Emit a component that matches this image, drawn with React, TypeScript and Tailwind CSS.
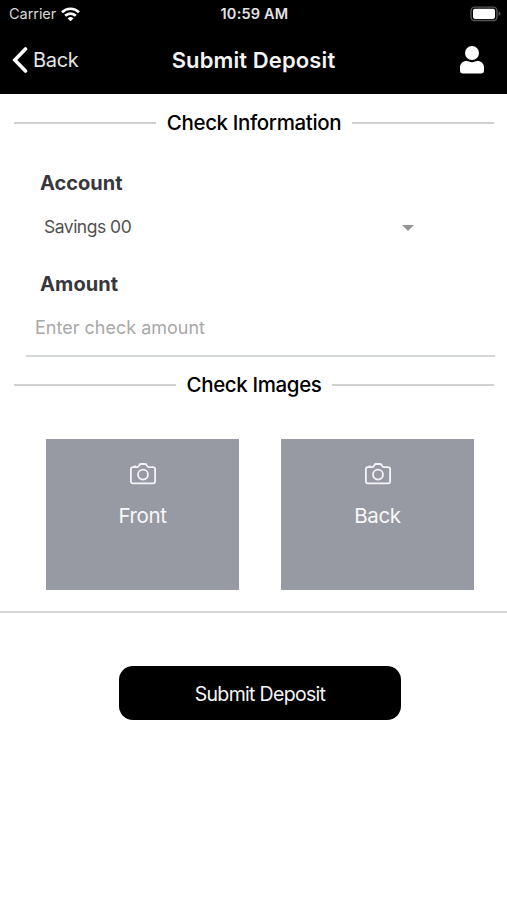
import { useState } from 'react';

function WifiIcon() {
  return (
    <svg width="19" height="15" viewBox="0 0 19 15" fill="none" stroke="#fff" strokeWidth="2.7">
      <path d="M1 5.200a12.200 12.200 0 0 1 17 0" />
      <path d="M4.200 8.800a7.600 7.600 0 0 1 10.600 0" />
      <path d="M9.500 14.300 6.500 11.500a4.400 4.400 0 0 1 6 0z" fill="#fff" stroke="none" />
    </svg>
  );
}

function BatteryIcon() {
  return (
    <svg width="32" height="16" viewBox="0 0 32 16" fill="none">
      <rect x="1" y="1.1" width="26" height="13.4" rx="3.6" stroke="#58585a" strokeWidth="1.4" />
      <rect x="3" y="2.700" width="22" height="10.200" rx="1.8" fill="#fff" />
      <path d="M28.6 5.6c1.2.4 1.9 1.2 1.9 2.2s-.7 1.8-1.9 2.2z" fill="#58585a" />
    </svg>
  );
}

function UserIcon() {
  return (
    <svg width="24" height="28" viewBox="0 0 24 28" fill="#fff">
      <circle cx="12" cy="7" r="7" />
      <path d="M0 23v-1.5C0 17.5 2.8 15 6.5 15c1.8 0 2.8 1.2 5.5 1.2S15.7 15 17.5 15c3.7 0 6.5 2.5 6.5 6.5V25a2.4 2.4 0 0 1-2.4 2.4H2.4A2.4 2.4 0 0 1 0 25z" />
    </svg>
  );
}

function CameraIcon() {
  return (
    <svg width="26" height="22" viewBox="0 0 26 22" fill="none" stroke="#f4f4f6" strokeWidth="1.8" strokeLinejoin="round">
      <path d="M3 4.2h4.2c.7 0 1-.3 1.4-.9l.8-1.300c.4-.7.9-1 1.600-1h4c.7 0 1.200.3 1.600 1l.8 1.300c.4.600.7.900 1.400.900H23a2.100 2.100 0 0 1 2.100 2.100v12A2.100 2.100 0 0 1 23 20.400H3A2.100 2.100 0 0 1 .9 18.300v-12A2.100 2.100 0 0 1 3 4.200z" />
      <path d="M3.500 3.500h2.600" />
      <circle cx="13" cy="11.600" r="5" />
    </svg>
  );
}

function SectionTitle({ title }: { title: string }) {
  return (
    <div className="flex h-7 items-center gap-[10.5px] pl-3.5 pr-[13px]">
      <div className="h-0.5 flex-1 bg-[#d0d0d0]" />
      <h2 className="whitespace-nowrap text-[20.5px] font-medium leading-7 tracking-[-0.37px] text-black">{title}</h2>
      <div className="h-0.5 flex-1 bg-[#d0d0d0]" />
    </div>
  );
}

function ImageTile({ label }: { label: string }) {
  return (
    <button className="flex h-[151px] w-[193px] flex-col items-center bg-[#989aa3] pt-6">
      <CameraIcon />
      <span className="mt-[17px] text-[20.5px] leading-7 tracking-[-0.4px] text-[#f8f8fa]">{label}</span>
    </button>
  );
}

export default function App() {
  const [amount, setAmount] = useState('');

  return (
    <div className="h-[900px] w-[507px] overflow-hidden bg-white font-['Inter',sans-serif]">
      <header className="h-[93.5px] bg-black text-white">
        {/* Status bar */}
        <div className="grid h-7 grid-cols-3 items-center pl-[9px] pr-[5px]">
          <div className="flex items-center gap-[5px]">
            <span className="text-[14.5px] tracking-[-0.05px] text-[#d8d8d8]">Carrier</span>
            <WifiIcon />
          </div>
          <span className="pr-[2px] text-center text-[14.5px] font-semibold tracking-[0.2px] text-[#e4e4e4]">10:59 AM</span>
          <div className="flex justify-end">
            <BatteryIcon />
          </div>
        </div>

        {/* Navigation bar */}
        <div className="grid h-16 grid-cols-[1fr_auto_1fr] items-center px-3">
          <button className="flex items-center gap-[5px]">
            <svg width="16" height="26" viewBox="0 0 16 26" fill="none" stroke="#fff" strokeWidth="3.6" strokeLinecap="round">
              <path d="M13.500 2 2.800 13l10.700 11" />
            </svg>
            <span className="text-[20px] tracking-[-0.3px] text-[#e6e6e6]">Back</span>
          </button>
          <h1 className="text-[22px] font-semibold tracking-[0.12px] text-[#f4f4f4]">Submit Deposit</h1>
          <button className="flex justify-end pr-[11px]">
            <UserIcon />
          </button>
        </div>
      </header>

      <main>
        <div className="pt-[15px]">
          <SectionTitle title="Check Information" />
        </div>

        <div className="mt-[32.5px] pl-10">
          <label className="block text-[20px] font-bold leading-7 text-[#37383b]">Account</label>
          <button className="mt-4 flex h-7 w-[373.5px] items-center justify-between pl-1">
            <span className="text-[17.5px] tracking-[-0.5px] text-[#505050]">Savings 00</span>
            <svg className="mt-0.5" width="12" height="6" viewBox="0 0 12 6" fill="#969696">
              <path d="M0 0h12L6 6z" />
            </svg>
          </button>
          <label className="mt-[29px] block text-[20px] font-bold leading-7 tracking-[0.1px] text-[#37383b]">Amount</label>
        </div>

        <div className="ml-[26px] mr-3 mt-[13px] h-[46px] border-b-2 border-[#d5d9d9] pl-[9px]">
          <input
            value={amount}
            onChange={e => setAmount(e.target.value)}
            placeholder="Enter check amount"
            className="h-8 w-full text-[18px] text-[#505050] outline-none placeholder:text-[#a8a8a8]"
          />
        </div>

        <div className="pt-3.5">
          <SectionTitle title="Check Images" />
        </div>

        <div className="mt-10 flex justify-between border-b-2 border-[#d6d6d6] pb-[21px] pl-[46px] pr-[33px]">
          <ImageTile label="Front" />
          <ImageTile label="Back" />
        </div>

        <button className="ml-[119px] mt-[53px] block h-[54px] w-[282px] rounded-[14px] bg-black pt-[3px] text-[19.5px] tracking-[-0.68px] text-[#f6f6f6]">
          Submit Deposit
        </button>
      </main>
    </div>
  );
}
